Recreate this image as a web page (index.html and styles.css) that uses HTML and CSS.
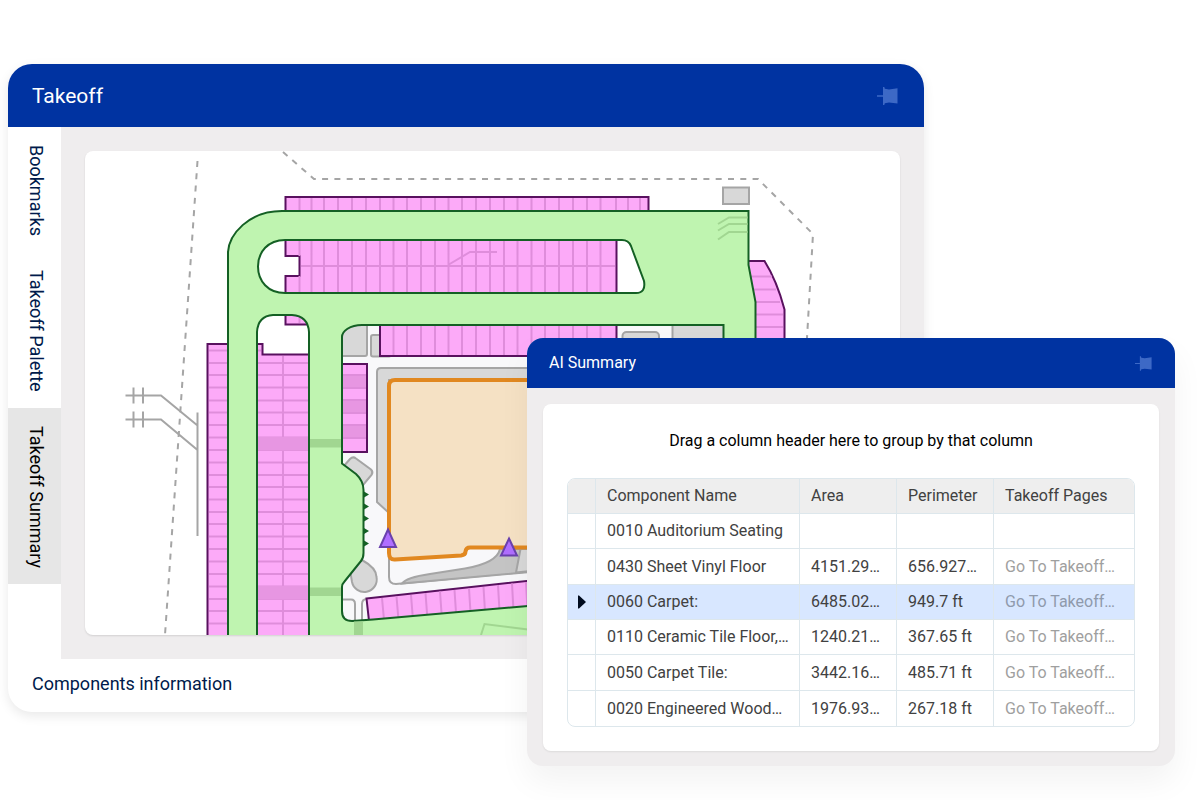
FILE: index.html
```html
<!DOCTYPE html>
<html lang="en">
<head>
<meta charset="utf-8">
<meta name="viewport" content="width=device-width, initial-scale=1">
<title>Takeoff</title>
<link rel="stylesheet" href="styles.css">
</head>
<body>
<main class="stage">
  <section class="window takeoff" aria-labelledby="takeoff-title">
    <header class="titlebar">
      <h1 class="title" id="takeoff-title">Takeoff</h1>
      <button class="pin" type="button" aria-label="Pin Takeoff">
        <svg class="pin-icon" viewBox="0 0 21 18" aria-hidden="true">
          <path d="M0 8.3H6V0H7.3L7.8 1.8L12 2.6L20.5 1.3V16.5L12 15.4L7.8 16.2L7.3 18H6V9.7H0Z"/>
        </svg>
      </button>
    </header>
    <div class="workspace">
      <div class="tabs" role="tablist" aria-orientation="vertical" aria-label="Panels">
        <button class="tab" type="button" role="tab" aria-selected="false">Bookmarks</button>
        <button class="tab" type="button" role="tab" aria-selected="false">Takeoff Palette</button>
        <button class="tab tab-active" type="button" role="tab" aria-selected="true">Takeoff Summary</button>
      </div>
      <div class="canvas">
        <div class="sheet">
          <svg class="plan" viewBox="85 151 815 484" role="img" aria-label="Site plan">
            <!-- property line -->
            <g class="dash">
              <path d="M197.5 161L165 635"/>
              <path d="M283 152L314 179H758L813 234L807 338"/>
            </g>
            <!-- utility leaders -->
            <path class="thin" d="M125.5 395.5H161L197.5 425.5M125.5 419.5H161L197.5 450M133.5 387.5V403.5M143 387.5V403.5M133.5 411.5V427.5M143 411.5V427.5M197.5 412.5V536"/>
            <rect class="pad" x="723" y="187.5" width="26" height="16.5"/>
            <!-- building surroundings -->
            <path class="ground" d="M342 325H724V640H342Z"/>
            <path class="pad" d="M342 320H367V354Q367 356 365 356H342Z"/>
            <rect class="pad" x="371" y="335" width="20" height="21.5" rx="2"/>
            <rect class="pad" x="622.5" y="332" width="36.5" height="24" rx="4"/>
            <path class="pad" d="M672.5 320H730V350H672.5Z"/>
            <path class="pad" d="M343 467L350 459Q353 456 356 458.5L371 469.5Q373.500 472 371.5 475L363 485"/>
            <path class="pad" d="M540 368H381Q377 368 377 372V502L389 513V380H540"/>
            <path class="thin" d="M389 558V577Q389 584 396 584L540 570.5M342 599.5H351Q355 599.5 355 604V625M362 622V604Q362 599 367 599"/>
            <path class="wedge" d="M402 583.5Q406 577.5 430 574L465 568.5Q497 563 500 549H540V571Z"/>
            <path class="pad" d="M520.5 549L516 572.5L540 570V549Z"/>
            <path class="pad" d="M350 570L362 560Q376.5 568 376.5 577A12.5 12.5 0 0 1 352 582Z"/>
            <path class="building" d="M540 380H395Q389 380 389 386V553Q389 560 395 559.5L461 555.5Q465.5 555 465.5 551.5Q466 547.5 470 547.5H540"/>
            <!-- parking: north rows -->
            <path class="bay" d="M285.5 197H648.5V220H285.5Z"/>
            <path class="bay" d="M285.5 230H616.5V300H285.5V276H299.5V256H285.5Z"/>
            <path class="bay" d="M285.5 310H320V324.5H285.5Z"/>
            <path class="bay" d="M380 310H616.5V356H380Z"/>
            <path class="stall" d="M299.5 198V211M299.5 240V256M299.5 276V293M299.5 315V323M311.5 198V293M324 198V293M338 198V293M352 198V293M366 198V293M380 198V293M393.5 198V355M407 198V355M421 198V355M435 198V355M448.5 198V355M462 198V355M476 198V355M490 198V355M504 198V355M517.5 198V355M531.5 198V355M545 198V355M559 198V355M573 198V355M587 198V355M600.5 198V355M616 198V211M628 198V211M640 198V211M301 266H615M448 265L470 252H497"/>
            <!-- parking: west columns -->
            <path class="bay" d="M207.5 344H262.5V354.5H320V650H207.5Z"/>
            <path class="stall" d="M209 350.5H261M209 363H310M209 375H310M209 387.5H310M209 400.5H310M209 412.5H310M209 425H310M209 437.5H310M209 450H310M209 462.5H310M209 475H310M209 487H310M209 499.5H310M209 512H310M209 524H310M209 536.5H310M209 549H310M209 561.5H310M209 574H310M209 586.5H310M209 599H310M209 611H310M209 623.5H310M283 356V635"/>
            <path class="bay-dark" d="M258 437H309V450.5H258ZM258 586H309V599.5H258Z"/>
            <path class="bay" d="M330 364H367V452H330Z"/>
            <path class="bay-dark" d="M342 375H366V388H342ZM342 400H366V413H342ZM342 425H366V438H342Z"/>
            <path class="stall" d="M342 375H366M342 388H366M342 400H366M342 413H366M342 425H366M342 438H366"/>
            <!-- parking: south strip and east curve -->
            <path class="bay" d="M366.5 598.5L540 579.5V615L370 630Z"/>
            <path class="stall" d="M382 598L384 620M396.5 596.5L398.5 620M411 595L413 620M425.5 593L427.5 620M440 591.5L442 620M454.5 590L456.5 620M469 588.5L471 620M483.5 587L485.5 620M498 585L500 620M512 583.5L514 620M526 582L528 620"/>
            <path class="bay" d="M745 261H764.5Q777 281 784.5 309.5V350H745Z"/>
            <path class="stall" d="M750 276.5H772M750 289.5H776M750 302H780M750 314.5H783M750 327H783"/>
            <!-- driveway -->
            <path class="drive" fill-rule="evenodd" d="M228 650V252C229 235 248 211 282 211H748.5V265L755.5 302V650ZM723.5 325H362C350 325 342 331 342 337V463.5L356 474Q363.5 481 363.5 490V553Q363.5 558 361 561L344.5 581.5Q342 584 342 587V611Q342 621 352 621L373 619.5L528 606L723.5 590ZM285 240H622Q628.5 240 631 246L644 281Q646 293 636 293H285C268 293 258 281 258 266.5C258 252 268 240 285 240ZM257 650V332Q258 316 273 315H292Q308 316 309 332V650Z"/>
            <path class="drive-dark" d="M310 439H341V447.5H310ZM310 587.5H341V596H310ZM354 621.5H363V636H354Z"/>
            <path class="drive-line" d="M747.5 217.5H729L718 224M747.5 224H729L718 230.5M747.5 232H729L718 239.5M481 635L484.5 624L540 631"/>
            <path class="arrows" d="M364 491.5L369 494.5L364 497.5ZM364 503.5L369 506.5L364 509.5ZM364 515.5L369 518.5L364 521.5ZM364 528L369 531L364 534ZM364 540.5L369 543.5L364 546.5Z"/>
            <!-- markers -->
            <path class="marker" d="M388 529.5L396 547H380ZM509 538.5L517 555.5H501Z"/>
          </svg>
        </div>
      </div>
    </div>
    <footer class="footer">Components information</footer>
  </section>

  <section class="window summary" aria-labelledby="summary-title">
    <header class="titlebar titlebar-small">
      <h2 class="title title-small" id="summary-title">AI Summary</h2>
      <button class="pin" type="button" aria-label="Pin AI Summary">
        <svg class="pin-icon pin-icon-small" viewBox="0 0 21 18" aria-hidden="true">
          <path d="M0 8.3H6V0H7.3L7.8 1.8L12 2.6L20.5 1.3V16.5L12 15.4L7.8 16.2L7.3 18H6V9.7H0Z"/>
        </svg>
      </button>
    </header>
    <div class="summary-body">
      <div class="panel">
        <p class="group-hint">Drag a column header here to group by that column</p>
        <table class="grid">
          <colgroup><col class="col-mark"><col class="col-name"><col class="col-num"><col class="col-num"><col></colgroup>
          <thead>
            <tr><th scope="col" aria-label="Current row"></th><th scope="col">Component Name</th><th scope="col">Area</th><th scope="col">Perimeter</th><th scope="col">Takeoff Pages</th></tr>
          </thead>
          <tbody>
            <tr><td></td><td>0010 Auditorium Seating</td><td></td><td></td><td></td></tr>
            <tr><td></td><td>0430 Sheet Vinyl Floor</td><td>4151.29…</td><td>656.927…</td><td><a class="go" href="#">Go To Takeoff…</a></td></tr>
            <tr class="current"><td class="mark"><svg class="mark-icon" viewBox="0 0 8 14" aria-hidden="true"><path d="M0 0.5H1L8 7L1 13.5H0Z"/></svg></td><td>0060 Carpet:</td><td>6485.02…</td><td>949.7 ft</td><td><a class="go" href="#">Go To Takeoff…</a></td></tr>
            <tr><td></td><td>0110 Ceramic Tile Floor,…</td><td>1240.21…</td><td>367.65 ft</td><td><a class="go" href="#">Go To Takeoff…</a></td></tr>
            <tr><td></td><td>0050 Carpet Tile:</td><td>3442.16…</td><td>485.71 ft</td><td><a class="go" href="#">Go To Takeoff…</a></td></tr>
            <tr><td></td><td>0020 Engineered Wood…</td><td>1976.93…</td><td>267.18 ft</td><td><a class="go" href="#">Go To Takeoff…</a></td></tr>
          </tbody>
        </table>
      </div>
    </div>
  </section>
</main>
</body>
</html>
```
FILE: styles.css
```css
* {
  box-sizing: border-box;
}

body {
  margin: 0;
  background: #fff;
  color: #001a4b;
  font-family: Roboto, "Liberation Sans", sans-serif;
  font-size: 16px;
}

button {
  border: 0;
  padding: 0;
  background: none;
  color: inherit;
  font: inherit;
  cursor: pointer;
}

.stage {
  position: relative;
  min-height: 100vh;
  padding: 64px 8px 88px;
  overflow: hidden;
}

.window {
  overflow: hidden;
}

.takeoff {
  width: calc(100% - 268px);
  border-radius: 24px;
  background: #fff;
  box-shadow: 0 4px 12px rgba(0, 0, 0, 0.09);
}

.titlebar {
  display: flex;
  align-items: center;
  justify-content: space-between;
  height: 63px;
  padding: 0 26px 0 24px;
  background: #0033a1;
  color: #fff;
}

.titlebar-small {
  height: 50px;
  padding: 0 23px 0 22px;
}

.title {
  margin: 0;
  font-size: 21px;
  font-weight: 400;
  line-height: 24px;
}

.title-small {
  font-size: 16px;
}

.pin {
  display: flex;
}

.pin-icon {
  width: 21px;
  height: 18px;
  fill: #3d69c6;
}

.pin-icon-small {
  width: 17px;
  height: 15px;
}

.workspace {
  display: flex;
  background: #efedee;
}

.tabs {
  flex: none;
  display: flex;
  flex-direction: column;
  width: 53px;
  background: #fff;
}

.tab {
  display: flex;
  align-items: center;
  justify-content: center;
  padding: 18px 0 16px 2px;
  font-size: 18px;
  line-height: 20px;
  white-space: nowrap;
  writing-mode: vertical-rl;
}

.tab-active {
  background: #e6e6e6;
  color: #000;
}

.canvas {
  flex: 1;
  min-width: 0;
  padding: 24px;
}

.sheet {
  overflow: hidden;
  border-radius: 8px;
  background: #fff;
  box-shadow: 0 1px 2px rgba(0, 0, 0, 0.12);
}

.plan {
  display: block;
  width: 100%;
}

.footer {
  padding: 13px 24px 16px;
  font-size: 18px;
  line-height: 24px;
}

.summary {
  position: absolute;
  top: 338px;
  right: 25px;
  width: 54%;
  border-radius: 16px;
  background: #efedee;
  box-shadow: 0 16px 32px rgba(0, 0, 0, 0.05);
}

.summary-body {
  padding: 16px 16px 15px;
}

.panel {
  padding: 25px 24px 24px;
  border-radius: 8px;
  background: #fff;
  box-shadow: 0 1px 2px rgba(0, 0, 0, 0.08);
}

.group-hint {
  margin: 0 0 25px;
  color: #000;
  line-height: 24px;
  text-align: center;
}

.grid {
  width: 100%;
  table-layout: fixed;
  border: 1px solid #dde7ec;
  border-radius: 8px;
  border-spacing: 0;
  overflow: hidden;
  color: #414141;
}

.col-mark {
  width: 28px;
}

.col-name {
  width: 204px;
}

.col-num {
  width: 97px;
}

.grid th,
.grid td {
  height: 35px;
  padding: 0 0 0 11px;
  border-right: 1px solid #dde7ec;
  border-bottom: 1px solid #dde7ec;
  font-weight: 400;
  line-height: 20px;
  text-align: left;
  white-space: nowrap;
}

.grid tbody tr:nth-child(3n + 2) td {
  height: 36px;
}

.grid th:last-child,
.grid td:last-child {
  border-right: 0;
}

.grid tr:last-child td {
  border-bottom: 0;
}

.grid th {
  background: #eee;
}

.grid .current td {
  background: #d8e7ff;
}

.grid .mark {
  padding: 0 0 0 10px;
}

.mark-icon {
  display: block;
  width: 8px;
  height: 14px;
  fill: #000b1e;
}

.go {
  color: #9f9f9f;
  text-decoration: none;
}

.current .go {
  color: #8f9aac;
}

.plan path,
.plan rect {
  stroke-width: 2;
}

.dash {
  fill: none;
  stroke: #a5a5a5;
  stroke-dasharray: 6 6.3;
}

.thin {
  fill: none;
  stroke: #a5a5a5;
}

.pad {
  fill: #d8d8d8;
  stroke: #a5a5a5;
}

.wedge {
  fill: #c4c4c4;
  stroke: #a5a5a5;
}

.ground {
  fill: #f8f8fa;
}

.plan .building {
  fill: #f5e1c4;
  stroke: #e18820;
  stroke-width: 4;
}

.bay {
  fill: #fcaaf8;
  stroke: #59115f;
}

.bay-dark {
  fill: #e796e2;
}

.stall {
  fill: none;
  stroke: #df8ddb;
}

.drive {
  fill: #bff4b0;
  stroke: #146024;
}

.drive-dark {
  fill: #a1d691;
}

.drive-line {
  fill: none;
  stroke: #a1d691;
}

.arrows {
  fill: #146024;
}

.marker {
  fill: #b06eff;
  stroke: #6a41ae;
}
```
